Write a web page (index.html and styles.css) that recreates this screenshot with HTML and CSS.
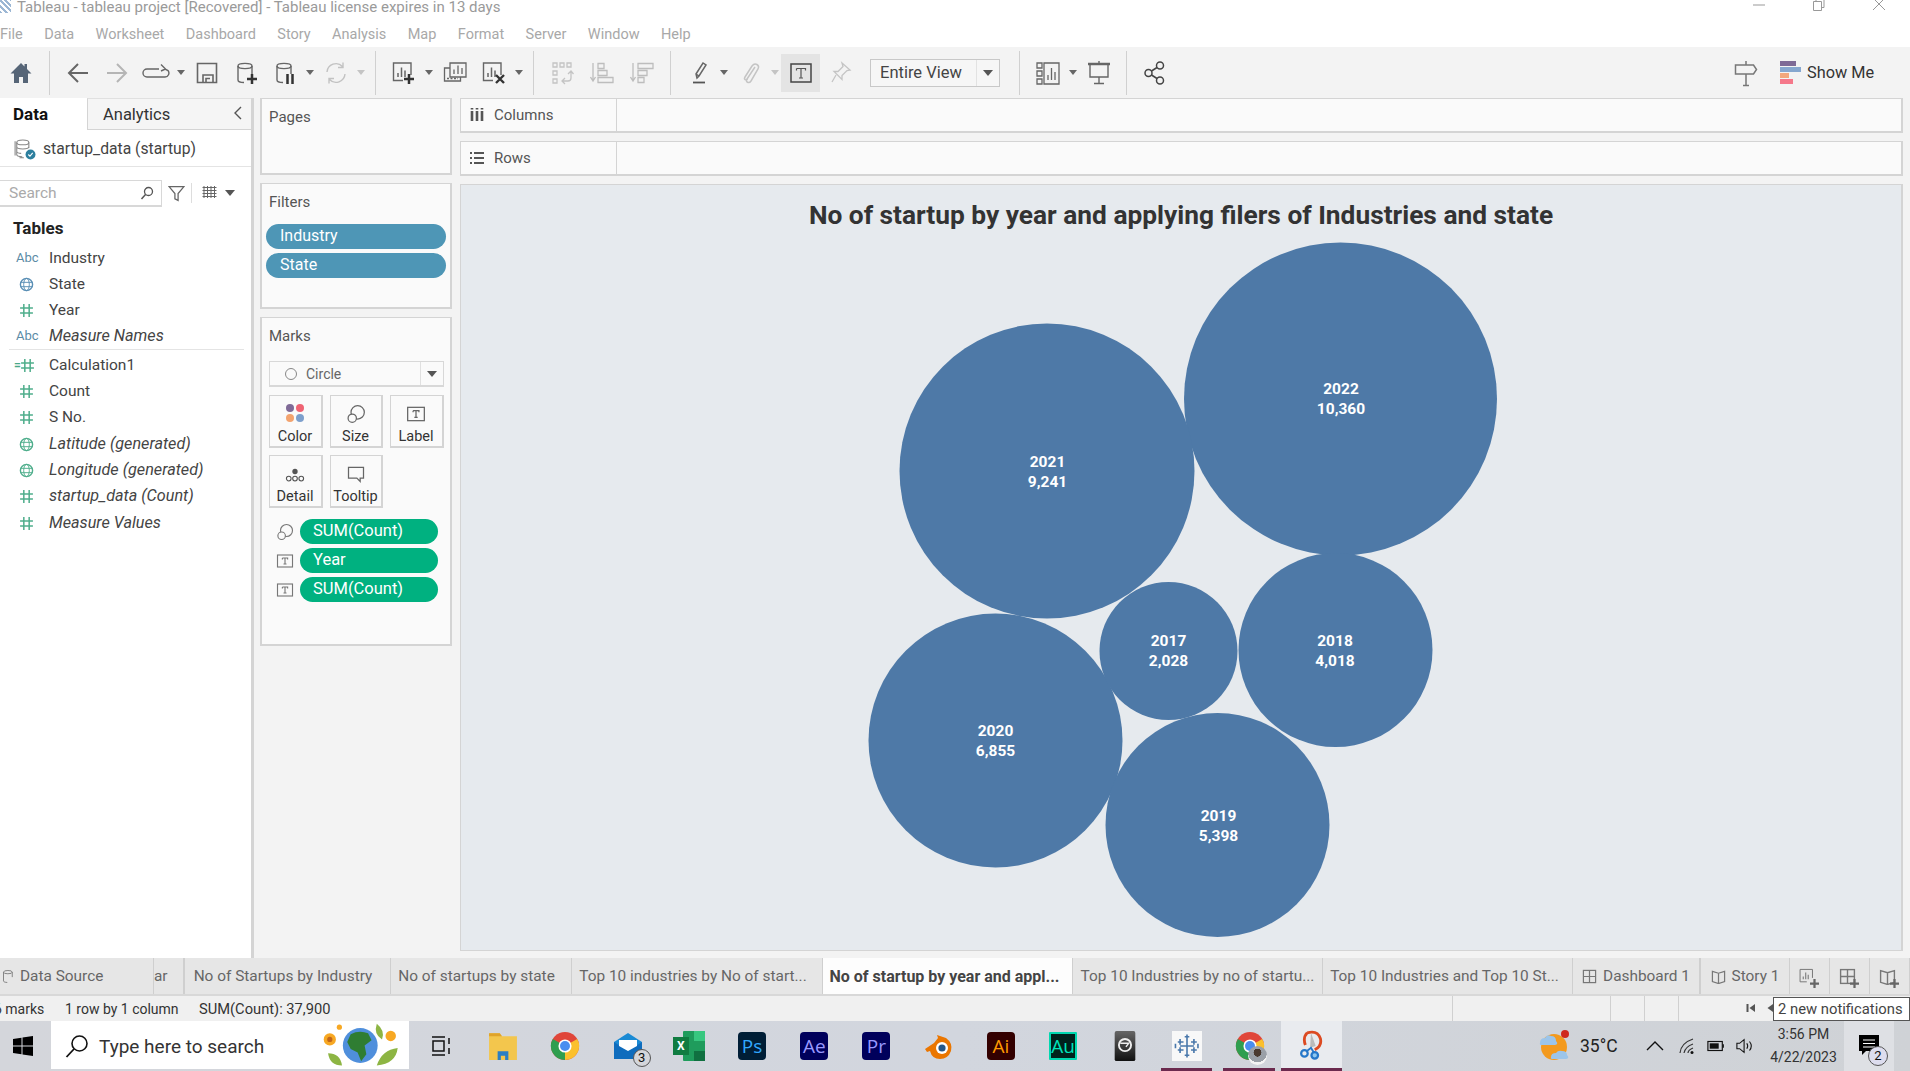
FILE: index.html
```html
<!DOCTYPE html>
<html lang="en">
<head>
<meta charset="utf-8">
<title>Tableau - tableau project [Recovered]</title>
<link rel="stylesheet" href="styles.css">
</head>
<body>
<svg class="defs" aria-hidden="true">
  <defs>
    <symbol id="db" viewBox="0 0 24 24"><ellipse cx="11" cy="5" rx="7" ry="2.600" fill="none" stroke="currentColor" stroke-width="1.400"/><path d="M4 5v14c0 1.500 2.500 2.500 6 2.500M18 5v8" fill="none" stroke="currentColor" stroke-width="1.400"/></symbol>
    <symbol id="chart" viewBox="0 0 24 24"><path d="M11 19.500H1.500V2h17.500v12" fill="none" stroke="currentColor" stroke-width="1.400"/><path d="M6 16v-4M9.500 16V6.500M13 16V9.500" stroke="currentColor" stroke-width="1.500"/></symbol>
    <symbol id="size" viewBox="0 0 24 24"><circle cx="14" cy="10" r="8" fill="none" stroke="currentColor" stroke-width="1.500"/><circle cx="7.500" cy="17" r="5" fill="#fafafa" stroke="currentColor" stroke-width="1.500"/></symbol>
    <symbol id="tbox" viewBox="0 0 24 24"><rect x="2" y="4" width="20" height="16" fill="none" stroke="currentColor" stroke-width="1.500"/><path d="M8.500 8h7v2M12 8v8M10 16h4M8.500 8v2" fill="none" stroke="currentColor" stroke-width="1.500"/></symbol>
    <symbol id="hash" viewBox="0 0 14 14"><path d="M4.500 1v12M9.500 1v12M1 4.700h12M1 9.300h12" stroke="currentColor" stroke-width="1.400" fill="none"/></symbol>
    <symbol id="globe" viewBox="0 0 16 16"><circle cx="8" cy="8" r="6.500" fill="none" stroke="currentColor" stroke-width="1.500"/><ellipse cx="8" cy="8" rx="3" ry="6.500" fill="none" stroke="currentColor"/><path d="M1.500 5.700h13M1.500 10.300h13" stroke="currentColor"/></symbol>
    <symbol id="plus" viewBox="0 0 10 10"><path d="M5 0v10M0 5h10" stroke="currentColor" stroke-width="2.500"/></symbol>
    <symbol id="grid4" viewBox="0 0 16 16"><rect x="1.500" y="1.500" width="13" height="13" fill="none" stroke="currentColor" stroke-width="1.300"/><path d="M8 1.500v13M1.500 8h13" stroke="currentColor" stroke-width="1.300"/></symbol>
    <symbol id="book" viewBox="0 0 16 16"><path d="M1.500 2.500l6.500 2 6.500-2v11l-6.500 2-6.500-2zM8 4.500v11" fill="none" stroke="currentColor" stroke-width="1.300"/></symbol>
    <symbol id="chrome" viewBox="0 0 32 32"><circle cx="16" cy="16" r="15" fill="#e0463a"/><path d="M16 16L29 8.500A15 15 0 0 1 16 31z" fill="#fbc02d"/><path d="M16 16L16 31A15 15 0 0 1 3 8.500z" fill="#2f9e4f"/><circle cx="16" cy="16" r="7" fill="#fff"/><circle cx="16" cy="16" r="5.300" fill="#4a8df0"/></symbol>
  </defs>
</svg>

<div class="app">
  <header class="titlebar">
    <span class="app-glyph"></span>
    <span class="title-text">Tableau - tableau project [Recovered] - Tableau license expires in 13 days</span>
    <div class="win-controls">
      <svg class="win-ic" viewBox="0 0 14 14"><path d="M1 7h12" stroke="#999" fill="none"/></svg>
      <svg class="win-ic" viewBox="0 0 14 14"><path d="M1.500 3.500h8v9h-8zM4 3.500V0h8v9.500H9.500" stroke="#999" fill="none"/></svg>
      <svg class="win-ic" viewBox="0 0 14 14"><path d="M1 0l12 12M13 0L1 12" stroke="#999" fill="none"/></svg>
    </div>
  </header>

  <nav class="menubar">
    <span>File</span><span>Data</span><span>Worksheet</span><span>Dashboard</span><span>Story</span><span>Analysis</span><span>Map</span><span>Format</span><span>Server</span><span>Window</span><span>Help</span>
  </nav>

  <div class="toolbar">
    <div class="tb home"><svg viewBox="0 0 24 24" class="ic"><path d="M12 2L1.500 12.500H5V22h5v-6h4v6h5v-9.500h3.500L18 8V3h-2.500v2.500z" fill="#566577"/></svg></div>
    <i class="sep"></i>
    <div class="tb"><svg viewBox="0 0 24 24" class="ic"><path d="M22 12H3M12 3l-9 9 9 9" fill="none" stroke="#666" stroke-width="2"/></svg></div>
    <div class="tb"><svg viewBox="0 0 24 24" class="ic"><path d="M2 12h19M12 3l9 9-9 9" fill="none" stroke="#b5b5b5" stroke-width="2"/></svg></div>
    <div class="tb"><svg viewBox="0 0 28 24" class="ic-w"><path d="M17 8H5a4 4 0 0 0 0 8h18a4 4 0 0 0 3-6.500L23 8M19 3.500L23.500 8 19 10" fill="none" stroke="#666" stroke-width="1.400"/></svg></div>
    <div class="caret-b"></div>
    <div class="tb"><svg viewBox="0 0 24 24" class="ic"><path d="M2.500 2.500h19v19h-19zM8 21.500V14h10v7.500M11 21.500v-4h4" fill="none" stroke="#666" stroke-width="1.600"/></svg></div>
    <div class="tb dark"><svg class="ic"><use href="#db"/></svg><svg class="plus"><use href="#plus"/></svg></div>
    <div class="tb dark"><svg class="ic"><use href="#db"/></svg><svg class="pause" viewBox="0 0 10 10"><path d="M2.500 0v10M7.500 0v10" stroke="#333" stroke-width="2.500"/></svg></div>
    <div class="caret-b"></div>
    <div class="tb"><svg viewBox="0 0 24 24" class="ic"><path d="M3 11a9 9 0 0 1 15.500-5.500M21 13a9 9 0 0 1-15.500 5.500M19 1.500v5h-5M5 22.500v-5h5" fill="none" stroke="#c2c2c2" stroke-width="1.400"/></svg></div>
    <div class="caret-b off"></div>
    <i class="sep"></i>
    <div class="tb dark"><svg class="ic"><use href="#chart"/></svg><svg class="plus chart-plus"><use href="#plus"/></svg></div>
    <div class="caret-b"></div>
    <div class="tb"><svg viewBox="0 0 24 24" class="ic"><path d="M7 2h16v14H7zM7 7H1.500v13h16v-4M11 13V8.500M15 13V4.500M19 13V7" fill="none" stroke="#666" stroke-width="1.300"/><path d="M4 17.500h11" stroke="#666" stroke-width="1.500" stroke-dasharray="2 1.500"/></svg></div>
    <div class="tb dark"><svg class="ic"><use href="#chart"/></svg><svg class="x" viewBox="0 0 10 10"><path d="M1 1l8 8M9 1L1 9" stroke="#333" stroke-width="2.400"/></svg></div>
    <div class="caret-b"></div>
    <i class="sep"></i>
    <div class="tb wide"><svg viewBox="0 0 24 24" class="ic"><path d="M3 2h4v4H3zM10 2h4v4h-4zM17 2h4v4h-4zM3 10h4v4H3zM3 18h4v4H3zM21 11v6a3 3 0 0 1-3 3h-6M15 17l-3 3 3 3M18 13l3-3 2.500 3" fill="none" stroke="#c4c4c4" stroke-width="1.300"/></svg></div>
    <div class="tb wide"><svg viewBox="0 0 24 24" class="ic"><path d="M3 2v17M.5 16l2.500 4 2.500-4" fill="none" stroke="#bdbdbd" stroke-width="1.300"/><path d="M8 2.500h6v5H8zM8 9.500h9v5H8zM8 16.500h15v5H8z" fill="none" stroke="#bdbdbd" stroke-width="1.300"/></svg></div>
    <div class="tb wide"><svg viewBox="0 0 24 24" class="ic"><path d="M3 2v17M.5 16l2.500 4 2.500-4" fill="none" stroke="#bdbdbd" stroke-width="1.300"/><path d="M8 2.500h15v5H8zM8 9.500h9v5H8zM8 16.500h6v5H8z" fill="none" stroke="#bdbdbd" stroke-width="1.300"/></svg></div>
    <i class="sep"></i>
    <div class="tb"><svg viewBox="0 0 24 24" class="ic"><path d="M10 17l-1-4L16 2l3 2-7 11zM9 13l3 2" fill="none" stroke="#666" stroke-width="1.500"/><path d="M6 21.500h12" stroke="#555" stroke-width="1.800"/></svg></div>
    <div class="caret-b"></div>
    <div class="tb"><svg viewBox="0 0 24 24" class="ic"><path d="M16 7l-8 12c-2 3 2 5 4 2l7-12c2-4-3-7-6-3L6 17c-1.500 2.500 1 4 2.500 2" fill="none" stroke="#c4c4c4" stroke-width="1.500" transform="translate(1 -1)"/></svg></div>
    <div class="caret-b off"></div>
    <div class="tb tbox-on"><svg viewBox="0 0 24 24" class="ic"><rect x="2" y="3" width="20" height="18" fill="none" stroke="#444" stroke-width="1.500"/><path d="M7.500 7.500h9v2M12 7.500V17M10 17h4M7.500 7.500v2" fill="none" stroke="#555" stroke-width="1.200"/></svg></div>
    <div class="tb"><svg viewBox="0 0 24 24" class="ic"><path d="M14 2l8 7-3 .5-5 5 0 4-8-8 4 0 5-5zM8 14l-4 7" fill="none" stroke="#c4c4c4" stroke-width="1.300"/></svg></div>
    <div class="fit-select"><span class="fit-text">Entire View</span><span class="fit-arrow"><b class="caret-b big"></b></span></div>
    <i class="sep"></i>
    <div class="tb"><svg viewBox="0 0 24 24" class="ic"><path d="M1 2h5v5H1zM1 10h5v5H1zM1 18h5v5H1zM8 2h15v21H8zM12 19v-5M15.500 19V7M19 19v-8" fill="none" stroke="#666" stroke-width="1.300"/></svg></div>
    <div class="caret-b"></div>
    <div class="tb"><svg viewBox="0 0 24 24" class="ic"><path d="M1 3h22" stroke="#666" stroke-width="2.500"/><path d="M12 0v3M3 3v13h18V3M12 16v6M7 22.500h10" fill="none" stroke="#666" stroke-width="1.400"/></svg></div>
    <i class="sep"></i>
    <div class="tb"><svg viewBox="0 0 24 24" class="ic"><circle cx="17" cy="4.500" r="3.500" fill="none" stroke="#444" stroke-width="1.500"/><circle cx="5.500" cy="12" r="3.500" fill="none" stroke="#444" stroke-width="1.500"/><circle cx="17" cy="19.500" r="3.500" fill="none" stroke="#444" stroke-width="1.500"/><path d="M14 6.500l-5.500 3.500M8.500 14l5.500 3.500" stroke="#444" stroke-width="1.500"/></svg></div>
    <div class="tb-spacer"></div>
    <div class="tb sign"><svg viewBox="0 0 24 28" class="ic-t"><path d="M1.500 6h18l3 4.500-3 4.500h-18zM12 2v4M12 15v11M9 26.500h6" fill="none" stroke="#777" stroke-width="1.500"/></svg></div>
    <div class="showme">
      <div class="showme-bars"><i class="b1"></i><i class="b2"></i><i class="b3"></i><i class="b4"></i></div>
      <span>Show Me</span>
    </div>
  </div>

  <main class="workspace">
    <aside class="data-pane">
      <div class="pane-tabs">
        <div class="pane-tab active">Data</div>
        <div class="pane-tab">Analytics<svg class="chev" viewBox="0 0 10 14"><path d="M8 1L2 7l6 6" fill="none" stroke="#555" stroke-width="1.400"/></svg></div>
      </div>
      <div class="source-row">
        <svg class="src-ic" viewBox="0 0 20 20"><ellipse cx="8" cy="4" rx="5.500" ry="2.200" fill="none" stroke="#888"/><path d="M2.500 4v11c0 1 2 2 5 2M13.500 4v5M2.500 8c0 1 2 2 5.500 2s5.500-1 5.500-2M2.500 12c0 1 2 2 4 2M1 3v13M5 18h4" fill="none" stroke="#888"/><circle cx="15" cy="15" r="4.500" fill="#2d7f9e"/><path d="M13 15l1.500 1.500L17 13.500" fill="none" stroke="#fff"/></svg>
        <span>startup_data (startup)</span>
      </div>
      <div class="search-row">
        <div class="search-box"><span>Search</span><svg viewBox="0 0 14 14"><circle cx="8.500" cy="5.500" r="4" fill="none" stroke="#555" stroke-width="1.300"/><path d="M5.500 8.500L1.500 13" stroke="#555" stroke-width="1.500"/></svg></div>
        <svg class="filter-ic" viewBox="0 0 16 16"><path d="M1 1.500h14L9.500 8v6.500L6.500 13V8z" fill="none" stroke="#666" stroke-width="1.200"/></svg>
        <i class="vbar"></i>
        <svg class="list-ic" viewBox="0 0 14 14"><path d="M0 1.500h14M0 4.500h14M0 7.500h14M0 10.500h14M1.500 0v12M5 0v12M8.500 0v12M12 0v12" stroke="#666" stroke-width="1"/></svg>
        <b class="caret-b big"></b>
      </div>
      <h2 class="tables-head">Tables</h2>
      <ul class="fields">
        <li><span class="ty abc">Abc</span>Industry</li>
        <li><svg class="ty-ic blue"><use href="#globe"/></svg>State</li>
        <li><svg class="ty-ic green"><use href="#hash"/></svg>Year</li>
        <li class="em"><span class="ty abc">Abc</span>Measure Names</li>
      </ul>
      <hr class="field-sep">
      <ul class="fields second">
        <li><span class="ty calc">=</span><svg class="ty-ic green calc-hash"><use href="#hash"/></svg>Calculation1</li>
        <li><svg class="ty-ic green"><use href="#hash"/></svg>Count</li>
        <li><svg class="ty-ic green"><use href="#hash"/></svg>S No.</li>
        <li class="em"><svg class="ty-ic green"><use href="#globe"/></svg>Latitude (generated)</li>
        <li class="em"><svg class="ty-ic green"><use href="#globe"/></svg>Longitude (generated)</li>
        <li class="em"><svg class="ty-ic green"><use href="#hash"/></svg>startup_data (Count)</li>
        <li class="em"><svg class="ty-ic green"><use href="#hash"/></svg>Measure Values</li>
      </ul>
    </aside>

    <section class="cards">
      <div class="card pages"><h3>Pages</h3></div>
      <div class="card filters">
        <h3>Filters</h3>
        <div class="pill blue-pill">Industry</div>
        <div class="pill blue-pill">State</div>
      </div>
      <div class="card marks">
        <h3>Marks</h3>
        <div class="mark-type">
          <span class="mark-name"><i class="ring"></i>Circle</span>
          <span class="mark-arrow"><b class="caret-b big"></b></span>
        </div>
        <div class="mark-grid">
          <div class="mark-btn">
            <span class="dots"><i class="d1"></i><i class="d2"></i><i class="d3"></i><i class="d4"></i></span>Color
          </div>
          <div class="mark-btn"><svg class="m-ic"><use href="#size"/></svg>Size</div>
          <div class="mark-btn"><svg class="m-ic"><use href="#tbox"/></svg>Label</div>
          <div class="mark-btn"><svg class="m-ic" viewBox="0 0 24 24"><circle cx="12" cy="9" r="3.200" fill="#555"/><circle cx="4.500" cy="17.500" r="2.800" fill="none" stroke="#555" stroke-width="1.300"/><circle cx="12" cy="17.500" r="2.800" fill="none" stroke="#555" stroke-width="1.300"/><circle cx="19.500" cy="17.500" r="2.800" fill="none" stroke="#555" stroke-width="1.300"/></svg>Detail</div>
          <div class="mark-btn"><svg class="m-ic" viewBox="0 0 24 24"><path d="M3 4h18v13h-4v4l-4-4H3z" fill="none" stroke="#666" stroke-width="1.500"/></svg>Tooltip</div>
        </div>
        <div class="enc-list">
          <div class="enc"><svg class="enc-ic"><use href="#size"/></svg><div class="pill green-pill">SUM(Count)</div></div>
          <div class="enc"><svg class="enc-ic"><use href="#tbox"/></svg><div class="pill green-pill">Year</div></div>
          <div class="enc"><svg class="enc-ic"><use href="#tbox"/></svg><div class="pill green-pill">SUM(Count)</div></div>
        </div>
      </div>
    </section>

    <section class="viz-col">
      <div class="shelf">
        <div class="shelf-label"><svg viewBox="0 0 14 14"><path d="M2 3v10M7 3v10M12 3v10" stroke="#555" stroke-width="2.600"/><path d="M2 0v1.500M7 0v1.500M12 0v1.500" stroke="#555" stroke-width="2.600"/></svg>Columns</div>
      </div>
      <div class="shelf">
        <div class="shelf-label"><svg viewBox="0 0 14 14"><path d="M4 2h10M4 7h10M4 12h10M0 2h2M0 7h2M0 12h2" stroke="#555" stroke-width="2"/></svg>Rows</div>
      </div>
      <div class="viz">
        <h1 class="viz-title">No of startup by year and applying filers of Industries and state</h1>
        <svg class="bubbles" viewBox="0.5 1 1442 766">
          <g class="bubble"><circle cx="880" cy="215" r="156.500"/><text x="880.500" y="209.500">2022</text><text x="880.500" y="229.500">10,360</text></g>
          <g class="bubble"><circle cx="586.500" cy="287" r="147.500"/><text x="587" y="282.500">2021</text><text x="587" y="302.500">9,241</text></g>
          <g class="bubble"><circle cx="535" cy="556.500" r="127"/><text x="535" y="552">2020</text><text x="535" y="572">6,855</text></g>
          <g class="bubble"><circle cx="757" cy="641" r="112"/><text x="758" y="636.500">2019</text><text x="758" y="656.500">5,398</text></g>
          <g class="bubble"><circle cx="875" cy="466" r="97"/><text x="874.500" y="462">2018</text><text x="874.500" y="482">4,018</text></g>
          <g class="bubble"><circle cx="708" cy="467" r="69"/><text x="708" y="462">2017</text><text x="708" y="482">2,028</text></g>
        </svg>
      </div>
    </section>
  </main>

  <div class="sheet-tabs">
    <div class="stab t-source"><svg class="s-ic"><use href="#db"/></svg>Data Source</div>
    <div class="stab t-clip">ar</div>
    <div class="stab t-ind">No of Startups by Industry</div>
    <div class="stab t-state">No of startups by state</div>
    <div class="stab t-long">Top 10 industries by No of start...</div>
    <div class="stab t-long active">No of startup by year and appl...</div>
    <div class="stab t-long">Top 10 Industries by no of startu...</div>
    <div class="stab t-long">Top 10 Industries and Top 10 St...</div>
    <div class="stab t-dash"><svg class="s-ic"><use href="#grid4"/></svg>Dashboard 1</div>
    <div class="stab t-story"><svg class="s-ic"><use href="#book"/></svg>Story 1</div>
    <div class="stab t-add"><svg class="add-ic"><use href="#chart"/></svg><svg class="add-plus"><use href="#plus"/></svg></div>
    <div class="stab t-add"><svg class="add-ic" viewBox="0 0 16 16"><use href="#grid4"/></svg><svg class="add-plus"><use href="#plus"/></svg></div>
    <div class="stab t-add"><svg class="add-ic" viewBox="0 0 16 16"><use href="#book"/></svg><svg class="add-plus"><use href="#plus"/></svg></div>
  </div>

  <div class="statusbar">
    <span class="st-marks">6 marks</span>
    <span class="st-rows">1 row by 1 column</span>
    <span class="st-sum">SUM(Count): 37,900</span>
    <div class="st-cells"><i class="c1"></i><i class="c2"></i><i class="c3"></i><i class="c4"></i></div>
    <div class="st-nav"><svg viewBox="0 0 10 10"><path d="M1.500 1v8" stroke="#555" stroke-width="2"/><path d="M9 1v8L3.500 5z" fill="#555"/></svg><svg viewBox="0 0 10 10"><path d="M9 1v8L3.500 5z" fill="#555"/></svg></div>
    <div class="notify">2 new notifications</div>
  </div>

  <footer class="taskbar">
    <div class="start"><svg viewBox="0 0 20 20"><path d="M0 3l8.500-1.200V9.500H0zM9.500 1.600L20 0v9.500H9.500zM0 10.500h8.500v7.700L0 17zM9.500 10.500H20V20L9.500 18.400z" fill="#000"/></svg></div>
    <div class="task-search">
      <svg class="mag" viewBox="0 0 24 24"><circle cx="14.500" cy="9.500" r="7.500" fill="none" stroke="#111" stroke-width="1.600"/><path d="M9 15l-7.500 8" stroke="#111" stroke-width="1.800"/></svg>
      <span>Type here to search</span>
      <svg class="earth" viewBox="0 0 90 54"><circle cx="8" cy="20" r="7" fill="#f7a823"/><circle cx="8" cy="20" r="3" fill="#c2661a"/><circle cx="19" cy="6" r="3" fill="#f7a823"/><circle cx="78" cy="16" r="6" fill="#f7a823"/><path d="M6 36q14 0 16 14-14 0-16-14zM62 2q10 8 6 18-10-6-6-18zM62 50q6-18 24-20-2 18-24 20z" fill="#8db543"/><circle cx="43" cy="27" r="20" fill="#4f8fdc"/><path d="M32 14q10-5 20-1l4 8-8 6 2 10-6 8-4-10-8-4-4-8z" fill="#2f7d32"/></svg>
    </div>
    <div class="task-icons">
      <div class="ti"><svg viewBox="0 0 24 24" class="ti-svg small"><path d="M3 3h13M3 21h13M4 7h11v10H4zM20 4v6M20 14v6" fill="none" stroke="#111" stroke-width="1.500"/></svg></div>
      <div class="ti"><svg viewBox="0 0 28 26" class="ti-svg"><path d="M1 1h10l2 3h14v22H1z" fill="#f3c64d"/><path d="M1 1h10l2 3H1z" fill="#dfa32b"/><path d="M9 26v-8h10v8h-3v-4h-4v4z" fill="#2b7fc3"/></svg></div>
      <div class="ti"><svg class="ti-svg"><use href="#chrome"/></svg></div>
      <div class="ti"><svg viewBox="0 0 30 30" class="ti-svg"><path d="M1 11L15 2l14 9v17H1z" fill="#1a8ad4"/><path d="M1 11l14 9 14-9v17H1z" fill="#0f6cbd"/><path d="M6 9h18v6l-9 5-9-5z" fill="#fff"/></svg><span class="ti-badge">3</span></div>
      <div class="ti"><svg viewBox="0 0 30 30" class="ti-svg"><rect x="8" width="22" height="30" rx="1" fill="#1f9c5c"/><rect x="19" width="11" height="10" fill="#37c77f"/><rect x="19" y="20" width="11" height="10" fill="#107040"/></svg><span class="xl">X</span></div>
      <div class="ti"><span class="app-sq ps">Ps</span></div>
      <div class="ti"><span class="app-sq ae">Ae</span></div>
      <div class="ti"><span class="app-sq pr">Pr</span></div>
      <div class="ti"><svg viewBox="0 0 30 28" class="ti-svg"><path d="M1 17l9-6 4-5-1-3 9 3q7 5 5 13-3 8-11 8-8 0-10-8L3 20z" fill="#ea7600"/><circle cx="18" cy="16" r="6" fill="#fff"/><circle cx="18" cy="16" r="3.600" fill="#265787"/></svg></div>
      <div class="ti"><span class="app-sq ai">Ai</span></div>
      <div class="ti"><span class="app-sq au">Au</span></div>
      <div class="ti"><svg viewBox="0 0 24 32" class="ti-svg"><defs><linearGradient id="g3" x1="0" y1="0" x2="0" y2="1"><stop offset="0" stop-color="#666"/><stop offset="1" stop-color="#111"/></linearGradient></defs><rect x="1" width="22" height="32" rx="2" fill="url(#g3)"/><circle cx="12" cy="15" r="6.500" fill="none" stroke="#eee" stroke-width="2"/><path d="M7 13h9l-3 4" fill="none" stroke="#eee" stroke-width="1.500"/></svg></div>
      <div class="ti run"><svg viewBox="0 0 26 26" class="ti-svg"><rect width="26" height="26" fill="#f8f8f8"/><path d="M13 5v16M7 13h12M13 3v4M11 5h4M13 19v4M11 21h4M7 7v5M5 9.500h5M19 7v5M16.500 9.500h5M7 14v5M5 16.500h5M19 14v5M16.500 16.500h5M3 11v4M22.500 11v4" stroke="#4a78ab" stroke-width="1.400"/></svg></div>
      <div class="ti run"><svg class="ti-svg"><use href="#chrome"/></svg><span class="avatar"></span></div>
      <div class="ti active-app"><svg viewBox="0 0 26 32" class="ti-svg"><path d="M9 3q11-3 14 6 2 8-6 12M9 3Q4 8 7 16" fill="none" stroke="#dc4a22" stroke-width="3"/><path d="M13 3l5 14-6 2z" fill="#bbb"/><circle cx="6" cy="25" r="3.500" fill="none" stroke="#2677c9" stroke-width="2.400"/><circle cx="17" cy="27" r="3.500" fill="#8fc8f0" stroke="#2677c9" stroke-width="2.400"/><path d="M8 23l5-4 3 5" fill="none" stroke="#2677c9" stroke-width="2"/></svg></div>
    </div>
    <div class="tray">
      <svg class="weather" viewBox="0 0 32 34"><circle cx="16" cy="18" r="13" fill="#f39a1e"/><circle cx="27" cy="5" r="4" fill="#cf2a1e"/><path d="M2 14q0-5 5-5 2-4 6-2 5 0 5 5 3 3-1 4H4q-3 0-2-2zM13 28q0-4 5-4 2-3 6-2 5 0 5 4 3 3-1 4H15q-3 0-2-2z" fill="#9cc5ea"/></svg>
      <span class="temp">35°C</span>
      <svg class="tray-ic up" viewBox="0 0 18 10"><path d="M1 9l8-8 8 8" fill="none" stroke="#111" stroke-width="1.400"/></svg>
      <svg class="tray-ic" viewBox="0 0 18 18"><path d="M2 16Q3 6 15 2M6 16q1-6 9-9M10 16q0-3 5-5" fill="none" stroke="#333" stroke-width="1.200"/><circle cx="14" cy="15.500" r="1.500" fill="#111"/></svg>
      <svg class="tray-ic" viewBox="0 0 20 14"><rect x="1" y="2" width="16" height="10" fill="none" stroke="#111" stroke-width="1.300"/><rect x="3" y="4" width="10" height="6" fill="#111"/><path d="M18 5v4" stroke="#111" stroke-width="1.500"/></svg>
      <svg class="tray-ic" viewBox="0 0 20 18"><path d="M1 6h3l5-4v14l-5-4H1zM12 6q2 3 0 6M15 4q4 5 0 10" fill="none" stroke="#111" stroke-width="1.200"/></svg>
      <div class="clock"><span>3:56 PM</span><span>4/22/2023</span></div>
      <div class="action"><svg viewBox="0 0 20 20"><path d="M0 0h20v16H7l-4 4v-4H0z" fill="#000"/><path d="M4 5h12M4 8.500h12M4 12h12" stroke="#fff"/></svg><span class="action-badge">2</span></div>
    </div>
  </footer>
</div>
</body>
</html>
```

FILE: styles.css
```css
* { box-sizing: border-box; }
html, body { margin: 0; padding: 0; }
body { width: 1910px; height: 1071px; overflow: hidden; font-family: Roboto, "Liberation Sans", sans-serif; font-size: 15px; color: #444; background: #fff; }
.defs { width: 0; height: 0; display: block; }
.app { width: 1910px; height: 1071px; display: flex; flex-direction: column; }
svg { display: block; }

/* title and menu */
.titlebar { height: 24px; display: flex; align-items: flex-start; color: #9a9a9a; font-size: 15px; line-height: 14px; flex: none; }
.app-glyph { width: 11px; height: 13px; background: repeating-linear-gradient(45deg, #9cb7d4 0 2px, #fff 2px 4px); margin-right: 6px; }
.win-controls { margin-left: auto; display: flex; gap: 46px; margin-right: 24px; }
.win-ic { width: 14px; height: 14px; margin-top: -2px; }
.menubar { height: 23px; display: flex; gap: 21.400px; align-items: center; color: #a8a8a8; font-size: 14.500px; padding-bottom: 2px; flex: none; }

/* toolbar */
.toolbar { height: 51px; background: #f3f3f3; display: flex; align-items: center; flex: none; }
.tb { width: 39px; height: 38px; display: flex; align-items: center; justify-content: center; position: relative; flex: none; color: #555; }
.tb.wide { width: 40px; }
.tb.home { width: 41px; }
.tb.dark { color: #666; }
.ic { width: 24px; height: 24px; }
.ic-w { width: 28px; height: 24px; }
.ic-t { width: 24px; height: 28px; }
.sep { width: 1px; height: 44px; background: #d0d0d0; margin: 0 8px; flex: none; }
.caret-b { width: 12px; flex: none; display: flex; justify-content: center; }
.caret-b::before { content: ""; border: 4px solid transparent; border-top: 5px solid #666; border-bottom: 0; }
.caret-b.off::before { border-top-color: #c4c4c4; }
.caret-b.big::before { border-left-width: 5px; border-right-width: 5px; border-top-width: 6px; border-top-color: #555; }
.plus { position: absolute; width: 10px; height: 10px; right: 8px; bottom: 8px; color: #333; }
.plus.chart-plus { right: 9px; }
.pause { position: absolute; width: 10px; height: 10px; right: 9px; bottom: 8px; }
.x { position: absolute; width: 10px; height: 10px; right: 8px; bottom: 8px; }
.tbox-on { background: #e4e4e4; }
.fit-select { width: 130px; height: 28px; margin-left: 11px; margin-right: 11px; border: 1px solid #c8c8c8; background: #f6f6f6; display: flex; flex: none; font-size: 16.500px; color: #444; }
.fit-text { flex: 1; padding-left: 9px; line-height: 26px; }
.fit-arrow { width: 23px; border-left: 1px solid #e2e2e2; display: flex; align-items: center; justify-content: center; }
.tb-spacer { flex: 1; }
.sign { margin-right: 15px; }
.showme { display: flex; align-items: center; gap: 6px; font-size: 16.300px; color: #333; width: 130px; flex: none; }
.showme-bars { display: flex; flex-direction: column; gap: 1px; width: 21px; }
.showme-bars i { display: block; height: 5px; }
.b1 { width: 16px; background: #7e6a96; }
.b2 { width: 21px; background: #86a7cf; }
.b3 { width: 9px; background: #f2a77d; }
.b4 { width: 13px; background: #f5788a; }

/* workspace */
.workspace { height: 860px; display: flex; background: #f3f3f3; flex: none; }
.data-pane { width: 254px; background: #fff; border-right: 3px solid #d4d4d4; flex: none; }
.pane-tabs { display: flex; height: 32px; }
.pane-tab { width: 164px; background: #f5f5f5; border-left: 1px solid #d4d4d4; border-bottom: 1px solid #d4d4d4; border-top: 1px solid #e0e0e0; padding: 6px 0 0 15px; font-size: 16.500px; position: relative; color: #333; }
.pane-tab.active { width: 87px; background: #fff; border: 0; font-weight: 700; color: #111; font-size: 17px; padding: 6px 0 0 13px; }
.chev { position: absolute; right: 8px; top: 7px; width: 10px; height: 14px; }
.source-row { height: 37px; display: flex; align-items: center; gap: 7px; padding: 1px 0 0 14px; border-bottom: 1px solid #e4e4e4; color: #444; font-size: 15.700px; }
.src-ic { width: 22px; height: 22px; }
.search-row { height: 24px; margin-top: 14px; display: flex; align-items: center; }
.search-box { width: 162px; height: 27px; border: 1px solid #d8d8d8; border-left: 0; border-bottom-width: 2px; display: flex; align-items: center; justify-content: space-between; padding: 0 7px 0 9px; color: #aaa; font-size: 15.500px; }
.search-box svg { width: 14px; height: 14px; }
.filter-ic { width: 17px; height: 17px; margin-left: 6px; }
.vbar { width: 1px; height: 20px; background: #ddd; margin: 0 10px 0 6px; }
.list-ic { width: 15px; height: 14px; }
.search-row .caret-b { margin-left: 7px; width: 12px; }
.tables-head { margin: 13px 0 0 13px; font-size: 17px; line-height: 20px; font-weight: 700; color: #222; }
.fields { list-style: none; margin: 7px 0 0; padding: 0; }
.fields li { height: 26px; line-height: 26px; padding-left: 49px; position: relative; color: #444; font-size: 15.500px; white-space: nowrap; }
.fields li.em { font-style: italic; font-size: 16.200px; }
.fields.second { margin-top: 1.500px; }
.fields.second li { height: 26.400px; }
.field-sep { margin: 0 7px 0 9px; border: 0; border-top: 1px solid #e4e4e4; }
.ty { position: absolute; left: 16px; top: 0; font-size: 13px; font-style: normal; color: #5b8ba6; }
.ty.calc { left: 14px; color: #4aa889; font-size: 12px; font-weight: 700; }
.ty-ic { position: absolute; left: 19px; top: 6px; width: 15px; height: 15px; }
.ty-ic.blue { color: #5a8fb5; }
.ty-ic.green { color: #4fae8c; }
.ty-ic.calc-hash { left: 20px; }

/* cards */
.cards { width: 192px; margin: 0 8px 0 6px; display: flex; flex-direction: column; gap: 8px; flex: none; }
.card { background: #fafafa; border: 2px solid #d4d4d4; border-width: 1px 2px 2px 2px; flex: none; padding: 0 7px; }
.card h3 { margin: 0; font-size: 15px; font-weight: 400; color: #555; line-height: 20px; }
.pages { height: 77px; padding-top: 8px; }
.filters { height: 126px; padding: 8px 4px 0 4px; }
.filters h3 { padding-left: 3px; margin-bottom: 12px; }
.marks { height: 329px; padding-top: 8px; }
.pill { height: 25px; line-height: 24px; border-radius: 13px; color: #fff; padding-left: 14px; font-size: 16px; }
.blue-pill { background: #4e96b6; margin-bottom: 3.500px; }
.green-pill { background: #00b180; flex: 1; padding-left: 13px; font-size: 16.500px; }
.mark-type { height: 26px; margin-top: 15px; display: flex; border: 1px solid #d8d8d8; border-bottom-width: 2px; color: #666; font-size: 14px; width: 175px; }
.mark-name { flex: 1; display: flex; align-items: center; gap: 9px; padding-left: 15px; }
.ring { width: 12px; height: 12px; border: 1.500px solid #888; border-radius: 50%; }
.mark-arrow { width: 23px; border-left: 1px solid #e0e0e0; display: flex; align-items: center; justify-content: center; }
.mark-grid { margin-top: 8px; width: 175px; display: grid; grid-template-columns: 54px 53px 54px; column-gap: 7px; row-gap: 7px; }
.mark-btn { height: 53px; border: 1px solid #d4d4d4; border-bottom-width: 2px; border-right-width: 2px; display: flex; flex-direction: column; align-items: center; padding: 8px 1px 0 0; font-size: 14.500px; color: #333; gap: 4px; background: #fafafa; }
.m-ic { width: 20px; height: 20px; color: #666; }
.dots { width: 18px; height: 18px; display: grid; grid-template-columns: 8px 8px; gap: 2px; margin-bottom: 2px; }
.dots i { width: 8px; height: 8px; border-radius: 50%; }
.d1 { background: #7f6a97; }
.d2 { background: #ef6373; }
.d3 { background: #f3a36f; }
.d4 { background: #7d9fcc; }
.enc-list { margin-top: 11px; display: flex; flex-direction: column; gap: 4px; }
.enc { display: flex; align-items: center; gap: 6px; padding: 0 5px 0 7px; }
.enc-ic { width: 18px; height: 18px; color: #777; flex: none; }
.enc .pill { height: 25px; }

/* viz */
.viz-col { width: 1443px; display: flex; flex-direction: column; gap: 8px; flex: none; }
.shelf { height: 35px; background: #fafafa; border: 1px solid #d4d4d4; border-bottom-width: 2px; border-right-width: 2px; flex: none; }
.shelf-label { width: 156px; height: 100%; border-right: 1px solid #d4d4d4; display: flex; align-items: center; gap: 10px; padding-left: 9px; color: #555; font-size: 15px; }
.shelf-label svg { width: 14px; height: 14px; }
.viz { height: 767px; background: #e6eaee; border: 1px solid #d4d4d4; border-right-width: 2px; position: relative; flex: none; }
.viz-title { margin: 0; text-align: center; font-size: 26.300px; line-height: 30px; font-weight: 700; color: #333; padding-top: 15px; }
.bubbles { position: absolute; left: 0; top: 0; width: 1442px; height: 766px; }
.bubble circle { fill: #4e79a7; }
.bubble text { fill: #fff; font: 700 15.500px Roboto, sans-serif; text-anchor: middle; }

/* sheet tabs */
.sheet-tabs { height: 38px; background: #e6e6e6; display: flex; border-bottom: 2px solid #d8d8d8; flex: none; font-size: 15.400px; color: #666; }
.stab { height: 36px; display: flex; align-items: center; justify-content: center; gap: 6px; border-right: 1px solid #cfcfcf; flex: none; white-space: nowrap; }
.stab.active { background: #fdfdfd; font-weight: 700; color: #444; font-size: 16px; padding-right: 6px; }
.t-source { width: 154px; justify-content: flex-start; padding-left: 1px; gap: 4px; }
.t-clip { width: 31px; justify-content: flex-start; border-right-width: 2px; }
.t-ind { width: 206px; padding-right: 9px; }
.t-state { width: 181px; padding-right: 9px; }
.t-long { width: 250px; }
.t-long:nth-child(5) { width: 251px; padding-right: 8px; }
.t-long:nth-child(8) { padding-right: 6px; }
.t-dash { width: 128px; border-right-width: 2px; }
.t-story { width: 89px; }
.t-add { width: 40px; position: relative; }
.s-ic { width: 15px; height: 15px; color: #777; }
.add-ic { width: 17px; height: 17px; color: #777; margin-right: 4px; }
.add-plus { position: absolute; width: 9px; height: 9px; right: 10px; bottom: 6px; color: #666; }

/* status */
.statusbar { height: 25px; background: #f0f0f0; display: flex; align-items: center; font-size: 14px; color: #333; position: relative; flex: none; overflow: visible; }
.st-marks { margin-left: -6px; width: 71px; }
.st-rows { width: 134px; }
.st-sum { font-size: 14.700px; }
.st-cells i { position: absolute; top: 0; height: 25px; width: 1px; background: #d0d0d0; }
.c1 { left: 1452px; }
.c2 { left: 1610px; }
.c3 { left: 1644px; }
.c4 { left: 1678px; }
.st-nav { position: absolute; left: 1746px; top: 7px; display: flex; gap: 8px; }
.st-nav svg { width: 10px; height: 10px; }
.notify { position: absolute; left: 1773px; top: 1px; width: 137px; height: 24px; background: #fff; border: 1px solid #555; font-size: 14.800px; line-height: 22px; padding-left: 4px; color: #444; white-space: nowrap; }

/* taskbar */
.taskbar { height: 50px; background: linear-gradient(90deg, #d4d6db, #d2d6de 50%, #cfd2d6); display: flex; flex: none; color: #111; }
.start { width: 51px; display: flex; align-items: center; justify-content: center; flex: none; padding-right: 6px; }
.start svg { width: 20px; height: 20px; }
.task-search { width: 358px; height: 48px; background: #fff; display: flex; align-items: center; flex: none; padding: 2px 0 0 14px; font-size: 19px; color: #333; position: relative; }
.mag { width: 24px; height: 24px; margin-right: 10px; }
.earth { position: absolute; left: 267px; top: 1px; width: 88px; height: 47px; }
.task-icons { display: flex; flex: none; width: 932px; padding-left: 1px; }
.ti { width: 62.200px; height: 50px; display: flex; align-items: center; justify-content: center; position: relative; flex: none; }
.ti-svg { width: 30px; height: 30px; }
.ti-svg.small { width: 24px; height: 24px; }
.ti.run::after { content: ""; position: absolute; left: 5px; right: 6px; bottom: 0; height: 3px; background: #6b2a4e; }
.ti.active-app { background: #e9ebef; border-bottom: 3px solid #6b2a4e; width: 61px; margin-left: 0; }
.ti-badge { position: absolute; right: 8px; bottom: 4px; width: 18px; height: 18px; border: 1px solid #555; border-radius: 50%; background: #d4d6db; font-size: 13px; line-height: 16px; text-align: center; }
.xl { position: absolute; left: 14px; top: 16px; width: 16px; height: 18px; background: #107c41; color: #fff; font-size: 12px; font-weight: 700; line-height: 18px; text-align: center; }
.app-sq { width: 28px; height: 28px; border-radius: 4px; font-size: 19px; font-weight: 500; line-height: 28px; text-align: center; font-family: "Open Sans", sans-serif; }
.ps { background: #001e36; color: #31a8ff; }
.ae { background: #00005b; color: #9999ff; }
.pr { background: #00005b; color: #9999ff; }
.ai { background: #330000; color: #ff9a00; }
.au { background: #00221c; color: #00e4bb; border: 2px solid #00d8b0; border-radius: 1px; line-height: 24px; }
.avatar { position: absolute; left: 30px; top: 25px; width: 19px; height: 19px; border-radius: 50%; background: radial-gradient(circle at 50% 35%, #4a3a30 0 25%, #9aa0a8 26% 60%, #f4f4f4 61%); }
.tray { flex: 1; display: flex; align-items: center; position: relative; padding-left: 197px; }
.weather { width: 32px; height: 34px; margin-right: 10px; flex: none; }
.temp { font-size: 17.500px; width: 66px; color: #222; flex: none; }
.tray-ic { width: 18px; height: 18px; margin-right: 11px; flex: none; }
.tray-ic.up { height: 10px; margin-right: 14px; }
.clock { display: flex; flex-direction: column; align-items: center; font-size: 14px; line-height: 23px; width: 77px; color: #333; flex: none; }
.action { position: absolute; right: 16px; top: 0; width: 50px; height: 50px; background: #dee0e4; display: flex; align-items: center; justify-content: center; }
.action svg { width: 20px; height: 20px; margin-top: -2px; }
.action-badge { position: absolute; left: 24px; top: 25px; width: 20px; height: 20px; border: 1px solid #555; border-radius: 50%; background: #dde; font-size: 13px; line-height: 18px; text-align: center; }
```
